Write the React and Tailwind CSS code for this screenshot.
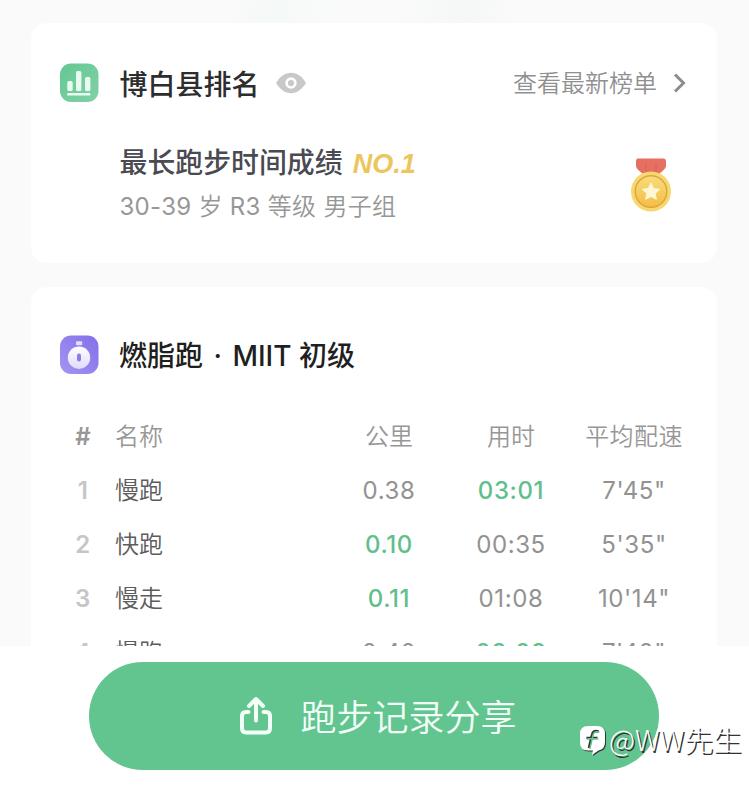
import clsx from "clsx";

const laps = [
  { id: 1, name: "慢跑", km: "0.38", time: "03:01", pace: "7'45\"", best: "time" },
  { id: 2, name: "快跑", km: "0.10", time: "00:35", pace: "5'35\"", best: "km" },
  { id: 3, name: "慢走", km: "0.11", time: "01:08", pace: "10'14\"", best: "km" },
  { id: 4, name: "慢跑", km: "0.40", time: "03:03", pace: "7'40\"", best: "time" },
];

const rowClass = "grid grid-cols-[46px_222px_122px_122px_124px] h-[54px] items-center text-center text-2xl";

function RankIcon() {
  return (
    <svg className="w-10 h-10 shrink-0" viewBox="0 0 40 40">
      <defs>
        <linearGradient id="rank" x1="0" y1="0" x2="1" y2="1">
          <stop offset="0" stopColor="#63c893" />
          <stop offset="1" stopColor="#80d1a6" />
        </linearGradient>
      </defs>
      <rect x="0" y="0.5" width="38.5" height="38.5" rx="11" fill="url(#rank)" />
      <g fill="#e9fbf1">
        <rect x="7.3" y="18" width="5.4" height="10" rx="1.5" />
        <rect x="16" y="8" width="5.4" height="20" rx="1.5" />
        <rect x="25" y="14" width="5.4" height="14" rx="1.5" />
        <rect x="7" y="30" width="23.5" height="2.6" rx="1.2" />
      </g>
    </svg>
  );
}

function TimerIcon() {
  return (
    <svg className="w-10 h-10 shrink-0" viewBox="0 0 40 40">
      <defs>
        <linearGradient id="timer" x1="1" y1="0" x2="0" y2="1">
          <stop offset="0" stopColor="#8270ea" />
          <stop offset="1" stopColor="#a594f2" />
        </linearGradient>
        <linearGradient id="dial" x1="0" y1="0" x2="0" y2="1">
          <stop offset="0" stopColor="#ffffff" />
          <stop offset="1" stopColor="#dfdbfa" />
        </linearGradient>
      </defs>
      <rect x="0" y="0.5" width="38.5" height="38.5" rx="11" fill="url(#timer)" />
      <rect x="16" y="6.2" width="6.2" height="4" rx="1" fill="#e4defc" />
      <circle cx="19" cy="22.7" r="11.2" fill="url(#dial)" />
      <rect x="17" y="18.5" width="4" height="8" rx="2" fill="#8d7dde" />
    </svg>
  );
}

function EyeIcon() {
  return (
    <svg className="w-[30px] h-[22px]" viewBox="0 0 30 22">
      <path d="M0 11C4 4.5 9 0.8 15 0.8S26 4.5 30 11C26 17.5 21 21.2 15 21.2S4 17.5 0 11Z" fill="#c8c8c8" />
      <circle cx="15" cy="11" r="4.4" fill="none" stroke="#fff" strokeWidth="2.6" />
    </svg>
  );
}

function Medal() {
  return (
    <svg className="w-[42px] h-[56px]" viewBox="0 0 42 56">
      <defs>
        <linearGradient id="gold" x1="0" y1="0" x2="0" y2="1">
          <stop offset="0" stopColor="#f9dc7c" />
          <stop offset="1" stopColor="#f3bd45" />
        </linearGradient>
      </defs>
      <path d="M8 1.5H33Q36 1.500 36 4.500V8.500C36 12 32 14 29 17H13C10 14 6 12 6 8.500V4.500Q6 1.500 8 1.500Z" fill="#e66f61" />
      <path d="M16 7v7M26 7v7" stroke="#d4635a" strokeWidth="1" />
      <circle cx="21" cy="34.5" r="20" fill="#f6d871" />
      <circle cx="21" cy="34.5" r="15.8" fill="url(#gold)" stroke="#dda43c" strokeWidth="1.4" />
      <path
        d="M21 26L23.7 31.5L29.6 32.3L25.3 36.5L26.3 42.3L21 39.5L15.7 42.3L16.7 36.5L12.4 32.3L18.3 31.5Z"
        fill="#fff6d4"
        stroke="#fff6d4"
        strokeLinejoin="round"
      />
    </svg>
  );
}

function ShareIcon() {
  return (
    <svg className="w-[34px] h-10" viewBox="0 0 34 40" fill="none" stroke="#f2fff8" strokeWidth="4" strokeLinecap="round" strokeLinejoin="round">
      <path d="M9.500 16H7Q3 16 3 20V32Q3 36.500 7 36.500H27Q31 36.500 31 32V20Q31 16 27 16H24.500" />
      <path d="M17 24.500V4M10 10L17 3L24 10" />
    </svg>
  );
}

function Watermark() {
  return (
    <div className="absolute left-[580px] top-[719px] flex items-center h-10 whitespace-nowrap">
      <svg className="w-7 h-[30px] mt-1 overflow-visible drop-shadow-[1.500px_1.500px_0_#333]" viewBox="0 0 28 30">
        <path d="M8 0H17Q25 0 25 8V16Q25 23.500 18.500 24.500L12 29L13 24.500H8Q0 24.500 0 16.500V8Q0 0 8 0Z" fill="#fff" />
        <path d="M18.500 5.500Q13 3.500 12 9L9 22M6.500 12H17.500" fill="none" stroke="#333" strokeWidth="2.600" />
        <path d="M19.300 6.300Q13.800 4.300 12.800 9.800L9.800 22.800M7.300 12.800H18.300" fill="none" stroke="#62c48f" strokeWidth="1.500" />
      </svg>
      <span className="ml-px text-[28.700px] font-light text-white font-['Noto_Sans_CJK_SC',sans-serif] [text-shadow:1.500px_1.500px_0.500px_#333]">
        @WW先生
      </span>
    </div>
  );
}

export default function App() {
  return (
    <div className="relative flex flex-col w-[749px] h-[786px] overflow-hidden bg-white font-[Inter,'Noto_Sans_CJK_SC',sans-serif]">

      <main className="h-[646px] overflow-hidden bg-[#fafafa] bg-[linear-gradient(100deg,transparent_31%,#f5f9f8_36%,#f8fafa_41%,transparent_45%,transparent_53%,#f5f8f7_62%,transparent_69%)] bg-no-repeat bg-[length:100%_23px] px-[31px] pt-[23px]">

        <section className="w-[686px] h-60 rounded-2xl bg-white pt-10 pl-[29px] pr-[31px]">
          <div className="flex items-center h-10">
            <RankIcon />
            <h2 className="ml-[19.500px] pt-[3px] text-[28px] font-medium text-[#2d2d2d]">博白县排名</h2>
            <span className="ml-4">
              <EyeIcon />
            </span>
            <a className="flex items-center ml-auto text-2xl font-[350] text-[#909090]">
              <span className="pt-px">查看最新榜单</span>
              <svg className="ml-4 w-[13px] h-5" viewBox="0 0 13 20" fill="none" stroke="#8c8c8c" strokeWidth="3">
                <path d="M2 1.500L10.500 10L2 18.500" />
              </svg>
            </a>
          </div>

          <div className="flex items-center justify-between mt-[38px] pl-[59.500px] pr-[14px]">
            <div>
              <p className="h-11 leading-[45px] text-[27.900px] font-medium text-[#4a4a52]">
                最长跑步时间成绩
                <span className="ml-[10px] text-[27px] font-bold italic text-[#ecc55b] font-['Liberation_Sans',sans-serif]">NO.1</span>
              </p>
              <p className="h-11 leading-[44px] text-2xl font-[350] tracking-[0.300px] text-[#979797]">
                <span className="font-normal">30-39</span> 岁 <span className="font-normal">R3</span> 等级 男子组
              </p>
            </div>
            <Medal />
          </div>
        </section>

        <section className="w-[686px] mt-6 rounded-2xl bg-white pt-12 pl-[29px] pr-[21px]">
          <div className="flex items-center h-10">
            <TimerIcon />
            <h2 className="ml-[19px] pt-[2px] text-[28px] font-medium text-[#1f1f1f]">
              燃脂跑 <span className="mx-[3px]">·</span> MIIT 初级
            </h2>
          </div>

          <div className="mt-[35px]">
            <div className={clsx(rowClass, "font-[350] text-[#979797]")}>
              <span className="font-semibold">#</span>
              <span className="pl-[9px] text-left">名称</span>
              <span>公里</span>
              <span>用时</span>
              <span className="tracking-[0.400px]">平均配速</span>
            </div>
            {laps.map((lap) => (
              <div key={lap.id} className={clsx(rowClass, "tracking-[0.600px] text-[#929292]")}>
                <span className="font-semibold text-[#c6c6c6]">{lap.id}</span>
                <span className="pl-[9px] text-left font-[350] tracking-normal text-[#5c5c5c]">{lap.name}</span>
                <span className={clsx(lap.best === "km" && "font-medium text-[#5fc08d]")}>{lap.km}</span>
                <span className={clsx(lap.best === "time" && "font-medium text-[#5fc08d]")}>{lap.time}</span>
                <span>{lap.pace}</span>
              </div>
            ))}
          </div>
        </section>

      </main>

      <footer className="flex justify-center pt-4 pr-px">
        <button className="flex items-center justify-center gap-[27px] w-[570px] h-[108px] pl-[8px] rounded-full bg-[#62c48f] text-4xl font-[350] text-[#f2fff8]">
          <ShareIcon />
          <span className="pt-[3px]">跑步记录分享</span>
        </button>
      </footer>

      <Watermark />

    </div>
  );
}
